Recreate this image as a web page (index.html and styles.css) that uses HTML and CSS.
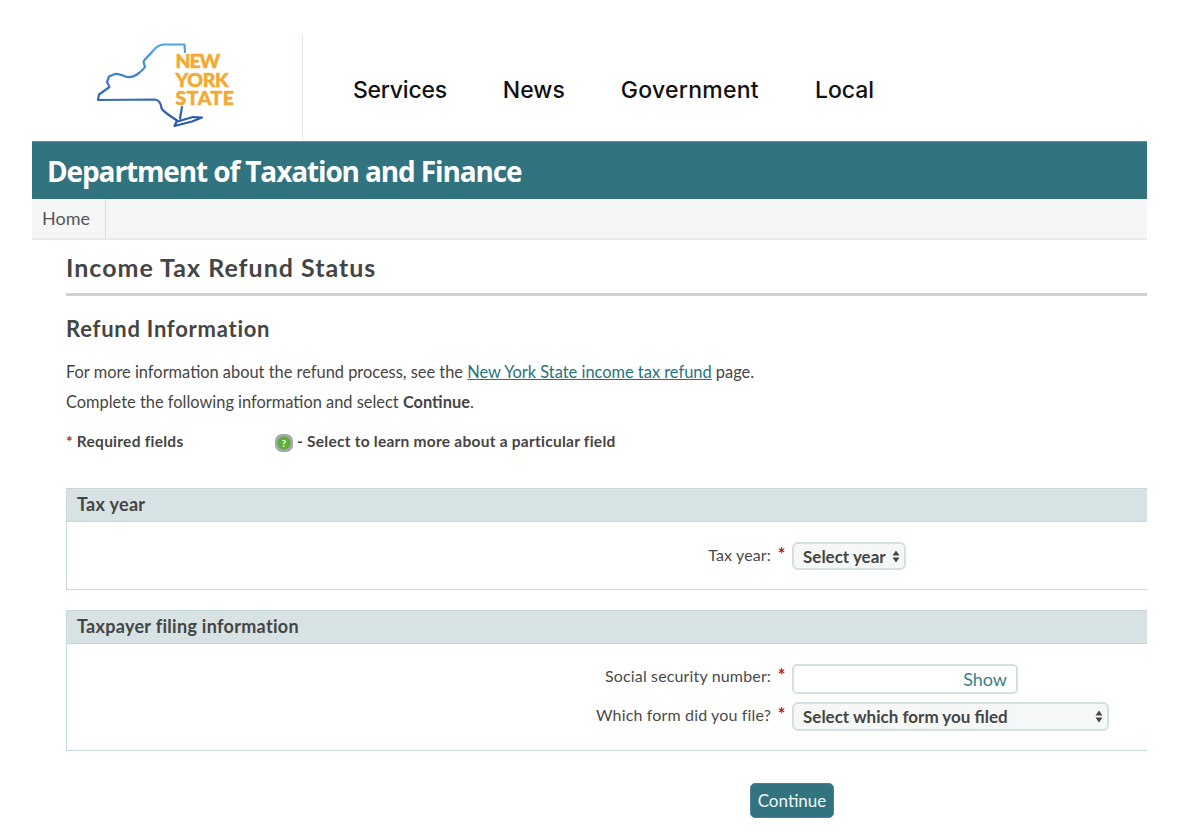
FILE: index.html
```html
<!DOCTYPE html>
<html lang="en">
<head>
<meta charset="utf-8">
<title>Income Tax Refund Status</title>
<link rel="stylesheet" href="styles.css">
</head>
<body>
<div class="page">
  <header class="top">
    <a class="logo-cell" href="#">
      <svg class="logo" width="150" height="100" viewBox="90 40 150 100">
        <defs>
          <linearGradient id="nyg" x1="0" y1="0" x2="0" y2="1">
            <stop offset="0" stop-color="#4fa6dc"/>
            <stop offset="0.55" stop-color="#3a6fc0"/>
            <stop offset="1" stop-color="#2c59ac"/>
          </linearGradient>
        </defs>
        <path class="ny-outline" stroke="url(#nyg)" d="M185 52 L184.500 44.500 L163 44.500 C158 45 155 48 152 52 C149 56 145 58 143.500 62 L145 67 C143 70 141 71 139 73 C135 76 131 77.500 127 77 C123 76 119 73 115 74 L109 76.500 L107 82 L109.500 87 L99 94.500 L98 100 L155 99.500 C159 100 161 104 161.500 108 C163 112 172 117 177 120.500 L174.500 126 L192 121.500 L202 117.500 L193 117 L177.500 121.500 M182 107 L180 118.500"/>
        <text class="ny-text ny-new" x="175.500" y="68">NEW</text>
        <text class="ny-text" x="175.500" y="86.500">YORK</text>
        <text class="ny-text ny-state" x="175.500" y="104.500">STATE</text>
      </svg>
    </a>
    <nav class="main-nav">
      <a href="#">Services</a>
      <a href="#">News</a>
      <a href="#">Government</a>
      <a href="#">Local</a>
    </nav>
  </header>
  <div class="banner">Department of Taxation and Finance</div>
  <div class="subnav"><a class="subnav-item" href="#">Home</a></div>
  <main class="content">
    <h1 class="title">Income Tax Refund Status</h1>
    <h2 class="subtitle">Refund Information</h2>
    <p class="para">For more information about the refund process, see the <a class="link" href="#">New York State income tax refund</a> page.</p>
    <p class="para para-2">Complete the following information and select <b>Continue</b>.</p>
    <div class="legend">
      <span class="legend-req"><span class="star">*</span> Required fields</span>
      <span class="legend-help">
        <svg class="help" width="20" height="20" viewBox="0 0 20 20">
          <rect x="1" y="1" width="18" height="18" rx="7" fill="#a3a8a5"/>
          <circle cx="10" cy="10" r="6.500" fill="#5cae35"/>
          <text class="help-q" x="10" y="13.500" text-anchor="middle">?</text>
        </svg>
        <span>- Select to learn more about a particular field</span>
      </span>
    </div>
    <section class="panel">
      <h3 class="panel-head">Tax year</h3>
      <div class="panel-body panel-year">
        <div class="row">
          <label class="lbl">Tax year:</label><span class="req">*</span>
          <select class="sel sel-year"><option>Select year</option></select>
        </div>
      </div>
    </section>
    <section class="panel panel-2">
      <h3 class="panel-head">Taxpayer filing information</h3>
      <div class="panel-body panel-filing">
        <div class="row row-ssn">
          <label class="lbl">Social security number:</label><span class="req">*</span>
          <div class="ssn"><span class="show">Show</span></div>
        </div>
        <div class="row row-form">
          <label class="lbl">Which form did you file?</label><span class="req">*</span>
          <select class="sel sel-form"><option>Select which form you filed</option></select>
        </div>
      </div>
    </section>
    <div class="actions"><button class="btn" type="button">Continue</button></div>
  </main>
</div>
</body>
</html>
```
FILE: styles.css
```css
* { box-sizing: border-box; }
html, body { margin: 0; padding: 0; background: #fff; }
body { font-family: Lato, "Open Sans", sans-serif; color: #454545; height: 838px; overflow: hidden; }
a { text-decoration: none; color: inherit; }
.page { width: 1115px; margin-left: 32px; padding-top: 34px; }

.top { display: flex; height: 107px; }
.logo-cell { width: 271px; height: 105px; border-right: 1px solid #e3e8e8; padding: 6px 0 0 58px; display: block; }
.logo { display: block; }
.ny-outline { fill: none; stroke-width: 2.200; stroke-linejoin: round; stroke-linecap: round; }
.ny-text { font-family: Lato, sans-serif; font-weight: 900; font-size: 19.500px; fill: #f2aa33; stroke: #f2aa33; stroke-width: 0.500px; letter-spacing: -0.300px; }
.ny-new { letter-spacing: -1.200px; }
.ny-state { letter-spacing: 0.500px; }
.main-nav { display: flex; gap: 56px; padding: 41px 0 0 50px; font-family: Inter, Roboto, sans-serif; font-size: 23px; font-weight: 500; color: #111; line-height: 30px; }
.main-nav a:nth-child(1) { letter-spacing: -0.250px; }
.main-nav a:nth-child(3) { letter-spacing: 0.250px; }

.banner { height: 58px; background: #31737f; color: #fff; font-family: "Open Sans", sans-serif; font-weight: 700; font-size: 28px; line-height: 58px; padding-left: 15px; letter-spacing: -1.130px; border-top: 1px solid #5d959e; }
.subnav { height: 41px; background: #f5f7f6; border-bottom: 2px solid #e8ebea; display: flex; }
.subnav-item { display: block; width: 74px; border-right: 1px solid #d8dcdb; padding-left: 10px; font-size: 18px; line-height: 38px; color: #555; }

.content { padding-left: 34px; }
.title { margin: 0; height: 56px; border-bottom: 3px solid #cfd1d1; font-size: 25px; font-weight: 700; line-height: 54px; color: #454545; letter-spacing: 1px; }
.subtitle { margin: 18px 0 0; font-size: 22px; font-weight: 700; line-height: 30px; color: #454545; letter-spacing: 0.750px; }
.para { margin: 16px 0 0; font-size: 16.400px; line-height: 24px; color: #454545; }
.para-2 { margin-top: 6px; }
.link { color: #1f7480; text-decoration: underline; }
.legend { display: flex; margin-top: 15px; height: 24px; font-size: 15.500px; font-weight: 700; line-height: 24px; color: #454545; letter-spacing: 0.250px; }
.legend-req { width: 208px; }
.legend-help { display: flex; align-items: center; gap: 3px; }
.help { display: block; margin-top: 3px; }
.help-q { font-family: Lato, sans-serif; font-size: 10px; font-weight: 900; fill: #e8f5e0; }
.star { color: #b3242a; }

.panel { margin-top: 35px; border: 1px solid #c6dcdc; border-right: 0; border-top: 0; }
.panel-2 { margin-top: 20px; }
.panel-head { margin: 0; height: 34px; background: #d6e2e3; border-top: 1px solid #c4d6d6; border-bottom: 1px solid #c4d6d6; padding-left: 10px; font-size: 18px; font-weight: 700; line-height: 31px; color: #454545; letter-spacing: 0.300px; }
.panel-year { height: 67px; padding-top: 22px; }
.panel-filing { height: 106px; padding-top: 21px; }
.row { display: flex; align-items: flex-start; }
.row-form { margin-top: 11px; }
.row-form .lbl { margin-top: -1px; }
.lbl { width: 704px; text-align: right; font-size: 16px; line-height: 22px; color: #4a4a4a; letter-spacing: 0.150px; }
.req { width: 21px; text-align: center; color: #b3242a; font-size: 18px; line-height: 20px; font-weight: 700; }
.row-form .req { margin-top: -1px; }
.sel { appearance: none; -webkit-appearance: none; display: block; margin: 0; font-family: Lato, sans-serif; font-size: 17px; font-weight: 700; color: #454545; background-color: #f6f8f8; border: 2px solid #d3e0e1; border-radius: 6px; padding: 0 0 0 9px; background-repeat: no-repeat; background-image: url("data:image/svg+xml,%3Csvg xmlns='http://www.w3.org/2000/svg' width='8' height='13'%3E%3Cpath d='M4 0.500L7.500 5.500H0.500ZM4 12.500L0.500 7.500H7.500Z' fill='%23454545'/%3E%3C/svg%3E"); }
.sel-year { width: 114px; height: 28px; margin-top: -2px; background-position: right 4px center; }
.sel-form { width: 317px; height: 29px; margin-top: -3px; background-position: right 4px center; }
.ssn { width: 226px; height: 30px; margin-top: -1px; border: 2px solid #d3e0e1; border-radius: 5px; background: #fff; display: flex; justify-content: flex-end; align-items: center; padding-right: 9px; }
.show { font-size: 18px; color: #38808a; line-height: 26px; }

.actions { margin-top: 32px; padding-left: 684px; }
.btn { display: block; width: 84px; height: 35px; background: #31737f; color: #f2f7f7; border: 1px solid #4b7fa6; border-radius: 5px; font-family: Lato, sans-serif; font-size: 17px; padding: 0; }
```
